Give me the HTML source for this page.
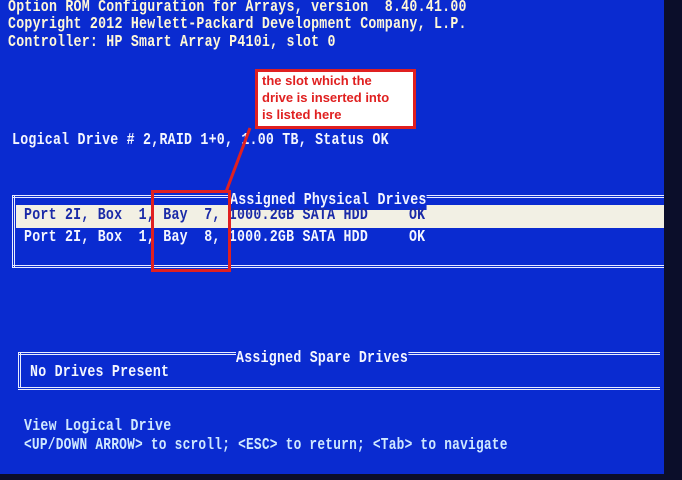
<!DOCTYPE html>
<html><head><style>
body{margin:0;width:682px;height:480px;overflow:hidden;background:#0b0e2a;position:relative;font-family:"Liberation Mono",monospace}
.scr{position:absolute;left:0;top:0;width:664px;height:474px;background:#0a2bd0}
.t{position:absolute;color:#f4f6ff;font-size:17px;white-space:pre;transform:scaleX(0.78);transform-origin:0 0;font-weight:bold;letter-spacing:0.3px}
.y{color:#fff8d8}
.c{color:#cfe8ff}
.dl{position:absolute;border-top:3px double #e8ecff;height:0}
.vl{position:absolute;border-left:3px double #e8ecff;width:0}
</style></head><body>
<div class="scr">
<div class="t y" style="left:8px;top:-2px">Option ROM Configuration for Arrays, version  8.40.41.00</div>
<div class="t y" style="left:8px;top:15px">Copyright 2012 Hewlett-Packard Development Company, L.P.</div>
<div class="t y" style="left:8px;top:33px">Controller: HP Smart Array P410i, slot 0</div>
<div class="t" style="left:12px;top:131px">Logical Drive # 2,RAID 1+0, 1.00 TB, Status OK</div>
<div class="dl" style="left:12px;top:195px;width:652px"></div>
<div class="vl" style="left:12px;top:195px;height:72px"></div>
<div class="dl" style="left:12px;top:265px;width:652px"></div>
<div style="position:absolute;left:16px;top:205px;width:648px;height:23px;background:#f2f0e4"></div>
<div class="t" style="left:230px;top:191px;background:#0a2bd0">Assigned Physical Drives</div>
<div class="t" style="left:24px;top:206px;color:#1a2aa8">Port 2I, Box  1, Bay  7, 1000.2GB SATA HDD     OK</div>
<div class="t" style="left:24px;top:228px">Port 2I, Box  1, Bay  8, 1000.2GB SATA HDD     OK</div>
<div class="dl" style="left:18px;top:352px;width:642px"></div>
<div class="vl" style="left:18px;top:352px;height:36px"></div>
<div class="dl" style="left:18px;top:387px;width:642px"></div>
<div class="t" style="left:236px;top:349px;background:#0a2bd0">Assigned Spare Drives</div>
<div class="t" style="left:30px;top:363px">No Drives Present</div>
<div class="t c" style="left:24px;top:417px">View Logical Drive</div>
<div class="t c" style="left:24px;top:436px;transform:scaleX(0.755)">&lt;UP/DOWN ARROW&gt; to scroll; &lt;ESC&gt; to return; &lt;Tab&gt; to navigate</div>
</div>
<div style="position:absolute;left:151px;top:190px;width:74px;height:76px;border:3px solid #e02020"></div>
<svg style="position:absolute;left:0;top:0" width="682" height="480"><line x1="250" y1="128" x2="226" y2="192" stroke="#e02020" stroke-width="3"/></svg>
<div style="position:absolute;left:255px;top:69px;width:151px;height:54px;border:3px solid #e02020;background:#fff;color:#e02020;font:bold 13px/17px 'Liberation Sans',sans-serif;padding:0 0 0 4px;white-space:nowrap">the slot which the<br>drive is inserted into<br>is listed here</div>
</body></html>
